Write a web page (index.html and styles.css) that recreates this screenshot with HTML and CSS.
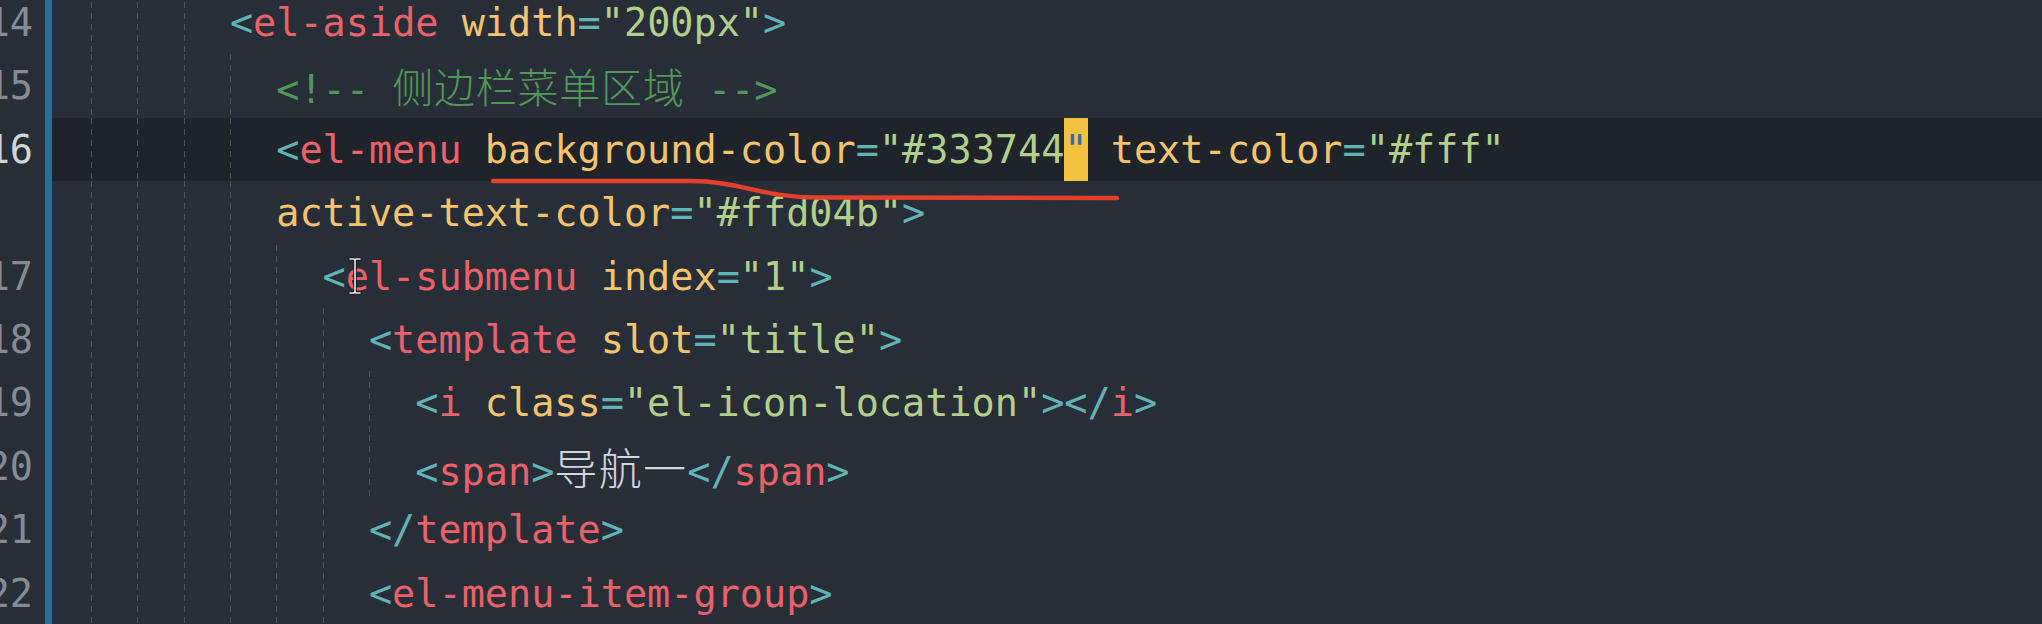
FILE: index.html
```html
<!DOCTYPE html>
<html lang="en">
<head>
  <meta charset="UTF-8">
  <title>Editor</title>
  <link rel="stylesheet" href="styles.css">
</head>
<body>
<div class="editor">
  <div class="gutter">
    <div class="ln">14</div>
    <div class="ln">15</div>
    <div class="ln current">16</div>
    <div class="ln"></div>
    <div class="ln">17</div>
    <div class="ln">18</div>
    <div class="ln">19</div>
    <div class="ln">20</div>
    <div class="ln">21</div>
    <div class="ln">22</div>
  </div>

  <div class="code">
    <div class="row"><span class="ind first"></span><span class="ind"></span><span class="ind"></span><span class="ind"></span><span class="p">&lt;</span><span class="t">el-aside</span> <span class="a">width</span><span class="p">=</span><span class="s">"200px"</span><span class="p">&gt;</span></div>
    <div class="row"><span class="ind first"></span><span class="ind"></span><span class="ind"></span><span class="ind"></span><span class="ind r"></span><span class="c">&lt;!-- <span class="zh">侧边栏菜单区域</span> --&gt;</span></div>
    <div class="row current"><span class="ind first"></span><span class="ind"></span><span class="ind"></span><span class="ind"></span><span class="ind r"></span><span class="p">&lt;</span><span class="t">el-menu</span> <span class="a">background-color</span><span class="p">=</span><span class="s">"#333744</span><span class="cur">"</span> <span class="a">text-color</span><span class="p">=</span><span class="s">"#fff"</span></div>
    <div class="row"><span class="ind first"></span><span class="ind"></span><span class="ind"></span><span class="ind"></span><span class="ind r"></span><span class="a">active-text-color</span><span class="p">=</span><span class="s">"#ffd04b"</span><span class="p">&gt;</span></div>
    <div class="row"><span class="ind first"></span><span class="ind"></span><span class="ind"></span><span class="ind"></span><span class="ind r"></span><span class="ind"></span><span class="p">&lt;</span><span class="t">el-submenu</span> <span class="a">index</span><span class="p">=</span><span class="s">"1"</span><span class="p">&gt;</span></div>
    <div class="row"><span class="ind first"></span><span class="ind"></span><span class="ind"></span><span class="ind"></span><span class="ind r"></span><span class="ind"></span><span class="ind r"></span><span class="p">&lt;</span><span class="t">template</span> <span class="a">slot</span><span class="p">=</span><span class="s">"title"</span><span class="p">&gt;</span></div>
    <div class="row"><span class="ind first"></span><span class="ind"></span><span class="ind"></span><span class="ind"></span><span class="ind r"></span><span class="ind"></span><span class="ind r"></span><span class="ind"></span><span class="p">&lt;</span><span class="t">i</span> <span class="a">class</span><span class="p">=</span><span class="s">"el-icon-location"</span><span class="p">&gt;&lt;/</span><span class="t">i</span><span class="p">&gt;</span></div>
    <div class="row"><span class="ind first"></span><span class="ind"></span><span class="ind"></span><span class="ind"></span><span class="ind r"></span><span class="ind"></span><span class="ind r"></span><span class="ind"></span><span class="p">&lt;</span><span class="t">span</span><span class="p">&gt;</span><span class="txt">导航一</span><span class="p">&lt;/</span><span class="t">span</span><span class="p">&gt;</span></div>
    <div class="row"><span class="ind first"></span><span class="ind"></span><span class="ind"></span><span class="ind"></span><span class="ind r"></span><span class="ind"></span><span class="ind r"></span><span class="p">&lt;/</span><span class="t">template</span><span class="p">&gt;</span></div>
    <div class="row"><span class="ind first"></span><span class="ind"></span><span class="ind"></span><span class="ind"></span><span class="ind r"></span><span class="ind"></span><span class="ind r"></span><span class="p">&lt;</span><span class="t">el-menu-item-group</span><span class="p">&gt;</span></div>
  </div>
</div>

<!-- hand drawn underline from the video annotation -->
<svg class="mark" width="2042" height="624" viewBox="0 0 2042 624">
  <path d="M493 181 L690 181 C740 181 760 197 815 197.5 L1117 198" fill="none" stroke="#e43f2b" stroke-width="4.5" stroke-linecap="round"/>
</svg>

<!-- mouse text cursor -->
<svg class="ibeam" width="20" height="38" viewBox="0 0 20 38">
  <path d="M5 2 H9 L10 3 L11 2 H15 M10 3 V35 M5 36 H9 L10 35 L11 36 H15" fill="none" stroke="#1b1e22" stroke-width="3.5" stroke-linecap="round"/>
  <path d="M5 2 H9 L10 3 L11 2 H15 M10 3 V35 M5 36 H9 L10 35 L11 36 H15" fill="none" stroke="#e9eaec" stroke-width="1.6" stroke-linecap="round"/>
</svg>
</body>
</html>
```

FILE: styles.css
```css
body {
  margin: 0;
  padding: 0;
  background: #282e37;
  font-family: "DejaVu Sans Mono", "Noto Sans CJK SC", monospace;
  font-size: 38.5px;
  overflow: hidden;
}
.editor {
  display: flex;
  margin-top: -9px;
  height: 640px;
}
.gutter {
  width: 44.5px;
  flex: none;
  overflow: hidden;
  box-sizing: border-box;
  padding-right: 11.5px;
  text-align: right;
  color: #858c93;
}
.ln {
  height: 63.4px;
  line-height: 63.4px;
  white-space: nowrap;
  direction: rtl;
}
.ln.current {
  color: #d2d5d8;
}
.code {
  flex: 1;
  background: linear-gradient(#2c6c97, #2c6c97) left top / 7px 100% no-repeat;
}
.row {
  height: 63.4px;
  line-height: 63.4px;
  white-space: pre;
  color: #d8dce0;
}
.row.current {
  background: linear-gradient(to right, transparent 7px, #1f242b 7px);
}
/* indent guides, one per 2 columns */
.ind {
  display: inline-block;
  width: 2ch;
  height: 63.4px;
  vertical-align: top;
  background: repeating-linear-gradient(to bottom, #4b525b 0 6px, transparent 6px 11px) left top / 1px 100% no-repeat;
}
.ind.r {
  background-image: repeating-linear-gradient(to bottom, #67434f 0 6px, transparent 6px 11px);
}
.ind.first {
  background: none;
}
.p { color: #62b3b5; }
.t { color: #ea6169; }
.a { color: #f3c470; }
.s { color: #b2cf8c; }
.c { color: #52975a; }
.zh {
  font-family: "Noto Sans CJK SC", sans-serif;
  font-weight: 300;
  font-size: 41px;
  letter-spacing: 0.8px;
}
.txt {
  font-family: "Noto Sans CJK SC", sans-serif;
  font-weight: 300;
  font-size: 43px;
  letter-spacing: 1.3px;
  color: #d3d6da;
}
.cur {
  display: inline-block;
  vertical-align: top;
  height: 63.4px;
  background: #f2c13d;
  color: #3566c4;
}
.mark {
  position: absolute;
  left: 0;
  top: 0;
  pointer-events: none;
}
.ibeam {
  position: absolute;
  left: 345px;
  top: 257px;
  pointer-events: none;
}
```
